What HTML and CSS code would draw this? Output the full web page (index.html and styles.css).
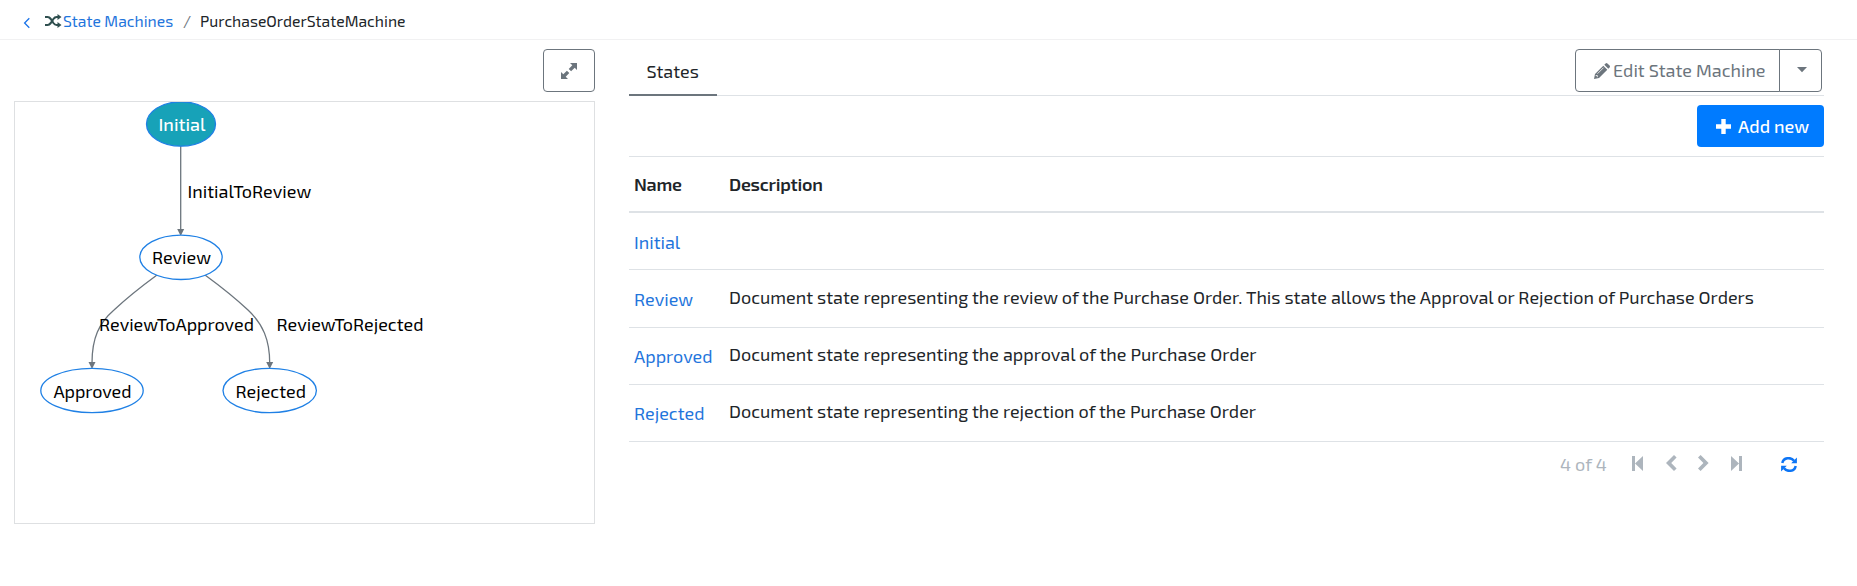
FILE: index.html
```
<!DOCTYPE html>
<html lang="en">
<head>
<meta charset="utf-8">
<title>PurchaseOrderStateMachine</title>
<link rel="stylesheet" href="styles.css">
</head>
<body>
<nav class="breadcrumb">
  <svg class="back" width="8" height="12" viewBox="0 0 8 12"><path d="M6.3 1.3 1.6 6l4.7 4.7" fill="none" stroke="#1a73e8" stroke-width="1.3"/></svg>
  <svg class="shuffle" width="17" height="14" viewBox="0 0 17 14"><g fill="none" stroke="#2f4f4f" stroke-width="2.1"><path d="M0 3h2.6c1.6 0 2.3.8 3.2 2L8.4 9c.9 1.3 1.8 2 3.2 2H13"/><path d="M0 11h2.6c1.6 0 2.3-.8 3.2-2L8.4 5c.9-1.3 1.8-2 3.2-2H13"/></g><path d="M12.500 0 16.500 3l-4 3zM12.500 8l4 3-4 3z" fill="#2f4f4f"/></svg>
  <a class="crumb-link" href="#">State Machines</a>
  <span class="slash">/</span>
  <span class="crumb-current">PurchaseOrderStateMachine</span>
</nav>
<main class="layout">
  <section class="diagram">
    <button class="btn expand" aria-label="Expand"><svg width="16" height="16" viewBox="0 0 16 16"><path d="M9 0h7v7l-2.3-2.3-3.6 3.6-2.4-2.4 3.6-3.6zM0 9l2.3 2.3 3.6-3.6 2.4 2.4-3.6 3.6L7 16H0z" fill="#6c757d"/><path d="M5 5l6 6" stroke="#fff" stroke-width="1.6"/></svg></button>
    <div class="canvas">
      <svg width="579" height="421" viewBox="15 102 579 421">
        <g class="edge">
          <path d="M180.700 146V230"/>
          <path d="M157 275C142 286 129 296 114 310C99 323 92 338 92 363"/>
          <path d="M205 275C220 286 233 296 248 310C263 324 269.700 340 269.700 363"/>
        </g>
        <g class="arrow">
          <path d="M177.200 229h7L180.700 236z"/>
          <path d="M88.500 362h7L92 369z"/>
          <path d="M266.200 362h7L269.700 369z"/>
        </g>
        <g class="node">
          <ellipse class="active" cx="181" cy="124" rx="34.500" ry="22.200"/>
          <ellipse cx="181" cy="257.300" rx="41.200" ry="22.200"/>
          <ellipse cx="92" cy="390.500" rx="51.200" ry="22.200"/>
          <ellipse cx="269.700" cy="390.500" rx="46.700" ry="22.200"/>
        </g>
        <g class="label">
          <text class="on" x="158.500" y="131" textLength="47">Initial</text>
          <text x="187.400" y="198" textLength="124">InitialToReview</text>
          <text x="152" y="264" textLength="59">Review</text>
          <text x="99" y="331" textLength="155">ReviewToApproved</text>
          <text x="276.500" y="331" textLength="147">ReviewToRejected</text>
          <text x="53.500" y="398" textLength="78">Approved</text>
          <text x="235.500" y="398" textLength="70.500">Rejected</text>
        </g>
      </svg>
    </div>
  </section>
  <section class="details">
    <header class="tabs">
      <div class="tab">States</div>
      <div class="btn-group">
        <button class="btn edit"><svg width="16" height="16" viewBox="0 0 16 16"><path d="M0 16l1-5L9.300 2.700l4 4L5 15zM10.300 1.700l1.300-1.300q.9-.8 1.800 0l2.200 2.200q.8.900 0 1.800l-1.300 1.300z" fill="#6c757d"/><path d="M3.500 10.700l6-6M1.700 12.500h1.600v1.700" stroke="#fff" stroke-width=".8" fill="none"/></svg><span>Edit State Machine</span></button>
        <button class="btn caret" aria-label="More"><svg width="10" height="6" viewBox="0 0 10 6"><path d="M0 0h10L5 5.300z" fill="#6c757d"/></svg></button>
      </div>
    </header>
    <div class="toolbar">
      <button class="add"><svg width="15" height="15" viewBox="0 0 15 15"><path d="M7.500 0v15M0 7.500h15" stroke="#fff" stroke-width="4.400"/></svg><span>Add new</span></button>
    </div>
    <div class="table">
      <div class="row head"><span>Name</span><span>Description</span></div>
      <div class="row"><a href="#">Initial</a><span></span></div>
      <div class="row tall"><a href="#">Review</a><span>Document state representing the review of the Purchase Order. This state allows the Approval or Rejection of Purchase Orders</span></div>
      <div class="row snug"><a href="#">Approved</a><span>Document state representing the approval of the Purchase Order</span></div>
      <div class="row snug"><a href="#">Rejected</a><span>Document state representing the rejection of the Purchase Order</span></div>
    </div>
    <footer class="pager">
      <span class="count">4 of 4</span>
      <svg class="first" width="11" height="15" viewBox="0 0 11 15"><path d="M0 0h3v15H0zM11 0v15L3 7.500z"/></svg>
      <svg class="prev" width="11" height="16" viewBox="0 0 11 16"><path d="M8 0l2.600 2.600L5.200 8l5.400 5.400L8 16 0 8z"/></svg>
      <svg class="next" width="11" height="16" viewBox="0 0 11 16"><path d="M2.600 0L0 2.600 5.400 8 0 13.400 2.600 16l8-8z"/></svg>
      <svg class="last" width="11" height="15" viewBox="0 0 11 15"><path d="M8 0h3v15H8zM0 0v15l8-7.500z"/></svg>
      <svg class="refresh" width="16" height="15" viewBox="0 0 16 15"><path d="M1.300 6C2.500 0 10 0 13 3.700M14.700 9C13.500 15 6 15 3 11.300" fill="none" stroke="#0d75f5" stroke-width="2.500"/><path d="M15.900.5v5.700h-5.700zM.1 14.500V8.800h5.700z" fill="#0d75f5"/></svg>
    </footer>
  </section>
</main>
</body>
</html>
```
FILE: styles.css
```
* { box-sizing: border-box; }
body { margin: 0; background: #fff; color: #212529; font-family: "Exo 2", Roboto, "Open Sans", sans-serif; font-size: 18px; line-height: 27px; }
svg { display: block; flex: none; }
a { color: #1f75dc; text-decoration: none; }
button { font: inherit; margin: 0; padding: 0; }
.breadcrumb { display: flex; align-items: center; height: 40px; padding: 0 0 0 23px; border-bottom: 1px solid #f1f1f2; font-size: 15.750px; white-space: nowrap; }
.back { margin: 7px 14px 0 0; }
.shuffle { margin: 2px 2px 0 0; }
.crumb-link { width: 109px; margin-left: -1px; padding-top: 2px; }
.slash { width: 8px; margin: 0 9px 0 11px; padding-top: 2px; color: #6c757d; }
.crumb-current { padding-top: 2px; }
.layout { display: flex; gap: 34px; padding: 9px 33px 0 14px; }
.diagram { display: flex; flex-direction: column; width: 581px; gap: 9px; }
.btn { display: flex; align-items: center; height: 43px; border: 1px solid #6c757d; border-radius: 4px; background: #fff; color: #6c757d; }
.expand { align-self: flex-end; justify-content: center; width: 52px; }
.canvas { height: 423px; border: 1px solid #dee0e2; }
.edge { fill: none; stroke: #6c757d; stroke-width: 1.300; }
.arrow { fill: #6c757d; }
.node { fill: #fff; stroke: #1f80e5; stroke-width: 1.300; }
.active { fill: #17a2b8; }
.label { fill: #000; font-size: 18px; }
.on { fill: #fff; font-weight: 500; }
.details { flex: 1; min-width: 0; }
.tabs { display: flex; justify-content: space-between; height: 47px; border-bottom: 1px solid #dee2e6; }
.tab { width: 88px; height: 47px; padding: 9px 0 0 17.500px; border-bottom: 2px solid #6c757d; }
.btn-group { display: flex; margin-right: 2px; }
.edit { width: 205px; gap: 3px; padding-left: 18px; border-radius: 4px 0 0 4px; white-space: nowrap; }
.caret { justify-content: center; width: 43px; margin-left: -1px; padding: 0 0 2px 3px; border-radius: 0 4px 4px 0; }
.toolbar { display: flex; justify-content: flex-end; padding: 9px 0; }
.add { display: flex; align-items: center; width: 127px; height: 42px; gap: 7px; padding-left: 19px; border: 0; border-radius: 4px; background: #007bff; color: #fff; font-weight: 500; white-space: nowrap; }
.table { border-top: 1px solid #dee2e6; white-space: nowrap; }
.row { display: grid; grid-template-columns: 95px 1fr; height: 57px; padding: 14px 0 0 5px; border-bottom: 1px solid #dee2e6; }
.row a { padding-top: 2px; }
.tall { height: 58px; }
.snug { padding-top: 13px; }
.head { height: 56px; border-bottom-width: 2px; font-weight: 600; letter-spacing: -.25px; }
.pager { display: flex; align-items: flex-start; padding: 13px 27px 0 0; justify-content: flex-end; fill: #adb5bd; }
.count { width: 46px; margin: -4px 26px 0 0; color: #adb5bd; white-space: nowrap; }
.first { margin: 1px 23px 0 0; }
.prev { margin-right: 21px; }
.next { margin-right: 22px; }
.last { margin: 1px 39px 0 0; }
.refresh { margin-top: 2px; }
```
